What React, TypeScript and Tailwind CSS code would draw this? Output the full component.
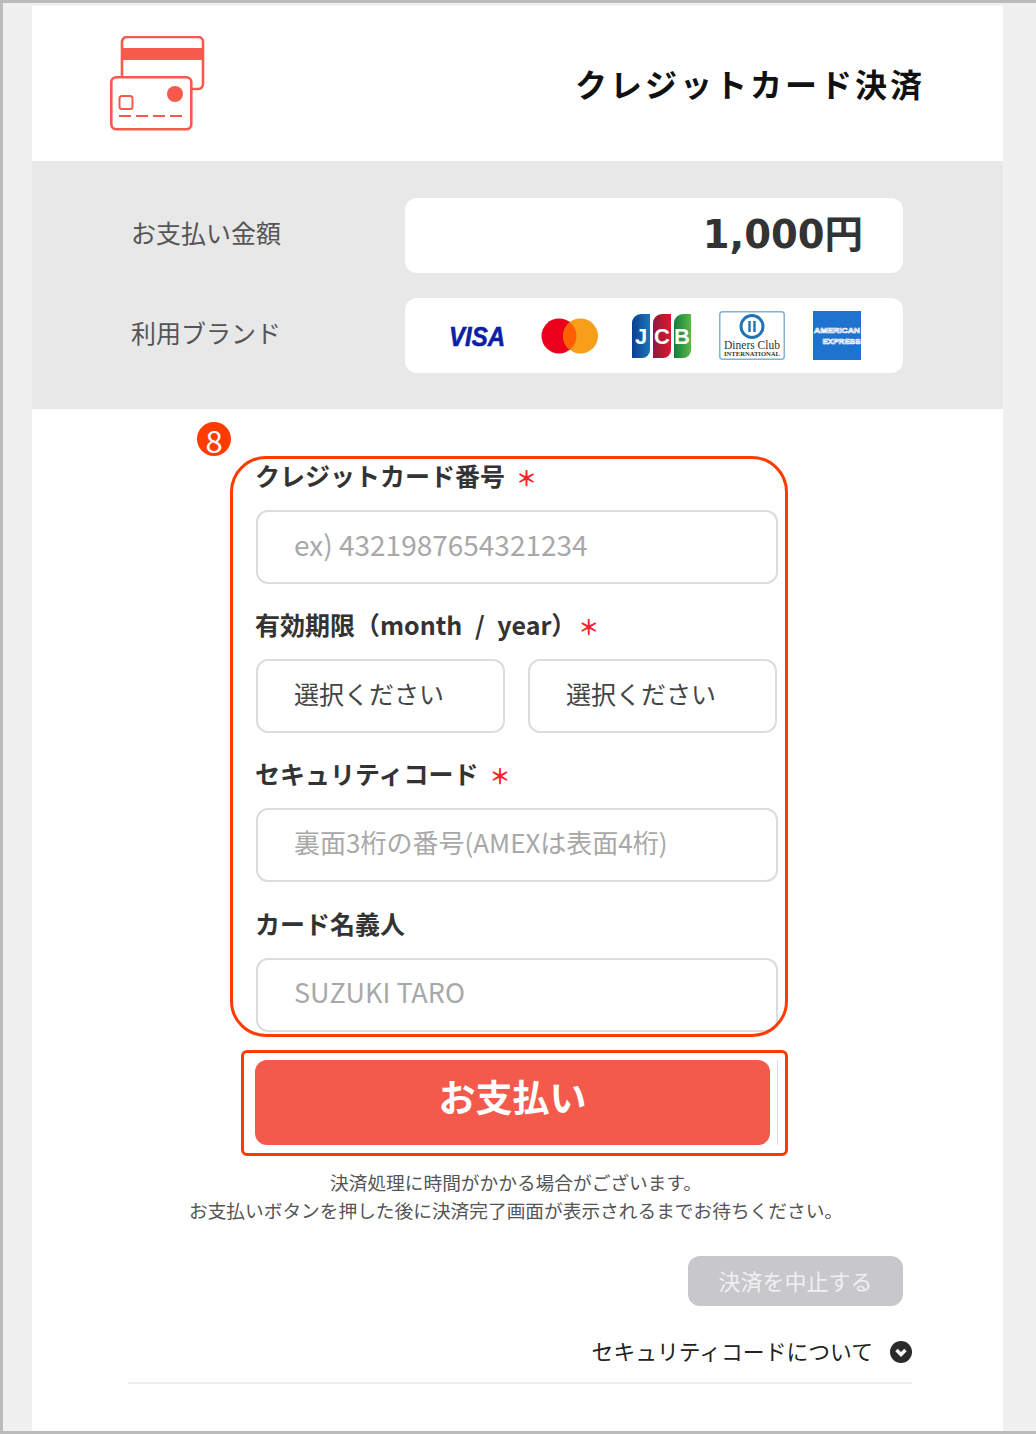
const jp = "font-['Noto_Sans_CJK_JP',sans-serif]";

function CardIcon() {
  return (
    <svg width="96" height="96" viewBox="0 0 96 96" fill="none">
      <path d="M12 42V6a5 5 0 0 1 5-5h71a5 5 0 0 1 5 5v42a5 5 0 0 1-5 5h-6" stroke="#f55a4c" strokeWidth="2.6" />
      <rect x="12" y="12" width="81" height="12" fill="#f55a4c" />
      <rect x="1.3" y="41.3" width="80" height="52" rx="5" fill="#fff" stroke="#f55a4c" strokeWidth="2.6" />
      <circle cx="65" cy="58" r="8" fill="#f55a4c" />
      <rect x="9.5" y="60" width="13" height="13" rx="2.5" stroke="#f55a4c" strokeWidth="2" />
      <path d="M9 80h64" stroke="#f55a4c" strokeWidth="2" strokeDasharray="12 5" />
    </svg>
  );
}

function Visa() {
  return (
    <svg width="66" height="36" viewBox="0 0 66 36">
      <text x="33" y="27.5" textAnchor="middle" fontFamily="'Liberation Sans', sans-serif" fontSize="27" fontWeight="700" fontStyle="italic" fill="#0b1fa5" stroke="#0b1fa5" strokeWidth="0.6" textLength="56" lengthAdjust="spacingAndGlyphs">VISA</text>
    </svg>
  );
}

function Mastercard() {
  return (
    <svg width="57" height="36" viewBox="0 0 57 36">
      <circle cx="18" cy="18" r="17.5" fill="#eb001b" />
      <circle cx="39.5" cy="18" r="17.5" fill="#f79e1b" />
      <path d="M28.75 4.2a17.5 17.5 0 0 1 0 27.6a17.5 17.5 0 0 1 0-27.6z" fill="#ff5f00" />
    </svg>
  );
}

function Jcb() {
  return (
    <svg width="60" height="46" viewBox="0 0 60 46">
      <defs>
        <linearGradient id="jcbBlue" x1="0" x2="1" y1="0" y2="0">
          <stop offset="0" stopColor="#0b3f8f" />
          <stop offset="1" stopColor="#1b75bc" />
        </linearGradient>
        <linearGradient id="jcbRed" x1="0" x2="1" y1="0" y2="0">
          <stop offset="0" stopColor="#8e1a3a" />
          <stop offset="1" stopColor="#e0162f" />
        </linearGradient>
        <linearGradient id="jcbGreen" x1="0" x2="1" y1="0" y2="0">
          <stop offset="0" stopColor="#0f7f3f" />
          <stop offset="1" stopColor="#5ab946" />
        </linearGradient>
      </defs>
      <path d="M1 10a9 9 0 0 1 9-9h9v36a8 8 0 0 1-8 8H1z" fill="url(#jcbBlue)" />
      <path d="M22 10a9 9 0 0 1 9-9h9v36a8 8 0 0 1-8 8h-10z" fill="url(#jcbRed)" />
      <path d="M43 10a9 9 0 0 1 9-9h8v36a8 8 0 0 1-8 8h-9z" fill="url(#jcbGreen)" />
      <text x="10" y="31" textAnchor="middle" fontFamily="'Liberation Sans', sans-serif" fontSize="22" fontWeight="700" fill="#fff">J</text>
      <text x="31" y="31" textAnchor="middle" fontFamily="'Liberation Sans', sans-serif" fontSize="22" fontWeight="700" fill="#fff">C</text>
      <text x="51" y="31" textAnchor="middle" fontFamily="'Liberation Sans', sans-serif" fontSize="22" fontWeight="700" fill="#fff">B</text>
    </svg>
  );
}

function Diners() {
  return (
    <svg width="66" height="49" viewBox="0 0 66 49">
      <rect x="0.75" y="0.75" width="64.5" height="47.5" rx="3" fill="#fff" stroke="#7fb2d9" strokeWidth="1.5" />
      <circle cx="33" cy="15.5" r="11" fill="#fff" stroke="#2173b5" strokeWidth="3" />
      <path d="M30.5 10v11M35.5 10v11" stroke="#2173b5" strokeWidth="2.4" />
      <text x="33" y="38" textAnchor="middle" fontFamily="'Liberation Serif', serif" fontSize="12.5" fill="#333" textLength="56" lengthAdjust="spacingAndGlyphs">Diners Club</text>
      <text x="33" y="45" textAnchor="middle" fontFamily="'Liberation Serif', serif" fontSize="6" fontWeight="700" fill="#333" textLength="56" lengthAdjust="spacingAndGlyphs">INTERNATIONAL</text>
    </svg>
  );
}

function Amex() {
  return (
    <svg width="48" height="49" viewBox="0 0 48 49">
      <rect width="48" height="49" fill="#1f72cd" />
      <text x="24" y="22" textAnchor="middle" fontFamily="'Liberation Sans', sans-serif" fontSize="8" fontWeight="700" fill="#1f72cd" stroke="#fff" strokeWidth="0.7" textLength="46" lengthAdjust="spacingAndGlyphs">AMERICAN</text>
      <text x="28.5" y="33" textAnchor="middle" fontFamily="'Liberation Sans', sans-serif" fontSize="8" fontWeight="700" fill="#1f72cd" stroke="#fff" strokeWidth="0.7" textLength="38" lengthAdjust="spacingAndGlyphs">EXPRESS</text>
    </svg>
  );
}

function FieldLabel({ text, required, star = "ml-[11px]" }: { text: string; required?: boolean; star?: string }) {
  return (
    <div className="-ml-[1px] flex h-[30px] items-center pb-[4px] text-[25px] leading-[30px] font-bold text-[#333] [word-spacing:7px]">
      <span>{text}</span>
      {required && <span className={`${star} mt-[4px] text-[21px] font-bold text-[#f5222d]`}>＊</span>}
    </div>
  );
}

function TextInput({ placeholder, size }: { placeholder: string; size: string }) {
  return (
    <input
      readOnly
      placeholder={placeholder}
      className={`${size} mt-[18px] block h-[74px] w-[522px] rounded-[12px] border-2 border-[#dcdce0] bg-white pb-[7px] pl-[36px] outline-none placeholder:text-[#a8a8a8]`}
    />
  );
}

function SelectBox() {
  return (
    <div className="flex h-[74px] w-[249px] items-center rounded-[12px] border-2 border-[#dcdce0] bg-white pb-[4px] pl-[36px] text-[25px] text-[#444]">
      選択ください
    </div>
  );
}

export default function App() {
  return (
    <div className={`relative h-[1434px] w-[1036px] border-t-[3px] border-b-[3px] border-l-[3px] border-[#bbbbbb] bg-[#f0f0f0] pt-[3px] pl-[29px] ${jp}`}>
      <div className="h-[1425px] w-[971px] bg-white">
        {/* Header */}
        <div className="flex h-[155px] items-start justify-between pr-[78px] pl-[78px]">
          <div className="mt-[30px]">
            <CardIcon />
          </div>
          <h1 className="mt-[54px] text-[32px] leading-[46px] font-bold tracking-[3px] text-[#111]">クレジットカード決済</h1>
        </div>

        {/* Amount and brands */}
        <div className="flex h-[248px] flex-col gap-[25px] bg-[#e8e8e8] pt-[37px] pl-[99px]">
          <div className="flex items-center">
            <div className="w-[274px] pb-[6px] text-[25px] text-[#555]">お支払い金額</div>
            <div className="flex h-[75px] w-[498px] items-center justify-end rounded-[12px] bg-white pr-[40px] pb-[2px] font-['DejaVu_Sans','Noto_Sans_CJK_JP',sans-serif] text-[38.5px] font-bold text-[#333]">1,000円</div>
          </div>
          <div className="flex items-center">
            <div className="w-[274px] pb-[6px] text-[25px] text-[#555]">利用ブランド</div>
            <div className="flex h-[75px] w-[498px] items-center rounded-[12px] bg-white pl-[39px]">
              <Visa />
              <div className="ml-[31px]"><Mastercard /></div>
              <div className="ml-[33px]"><Jcb /></div>
              <div className="ml-[28px]"><Diners /></div>
              <div className="ml-[28px]"><Amex /></div>
            </div>
          </div>
        </div>

        {/* Card form */}
        <div className="ml-[224px] w-[522px] pt-[53px]">
          <FieldLabel text="クレジットカード番号" required />
          <TextInput placeholder="ex) 4321987654321234" size="text-[28px]" />
          <div className="mt-[27px]">
            <FieldLabel text="有効期限（month / year）" required star="ml-[2px]" />
          </div>
          <div className="mt-[18px] flex gap-[23px]">
            <SelectBox />
            <SelectBox />
          </div>
          <div className="mt-[27px]">
            <FieldLabel text="セキュリティコード" required />
          </div>
          <TextInput placeholder="裏面3桁の番号(AMEXは表面4桁)" size="text-[26px]" />
          <div className="mt-[28px]">
            <FieldLabel text="カード名義人" />
          </div>
          <TextInput placeholder="SUZUKI TARO" size="text-[27px]" />
        </div>

        {/* Pay button */}
        <div className="mt-[28px] ml-[223px] w-[523px] border-r border-[#dddddd]">
          <button className="flex h-[85px] w-[515px] items-center justify-center rounded-[12px] bg-[#f35a4c] pb-[12px] text-[37px] font-bold text-white">お支払い</button>
        </div>

        <p className="mt-[23px] w-[968px] text-center text-[18.7px] leading-[28px] text-[#555]">
          決済処理に時間がかかる場合がございます。
          <br />
          お支払いボタンを押した後に決済完了画面が表示されるまでお待ちください。
        </p>

        <div className="mt-[32px] flex justify-end pr-[100px]">
          <button className="flex h-[50px] w-[215px] items-center justify-center rounded-[12px] bg-[#c8c8cc] pb-[2px] text-[22px] text-[#f0f0f0]">決済を中止する</button>
        </div>

        {/* Security code note */}
        <div className="mt-[30px] mr-[91px] ml-[96px] flex h-[48px] items-start justify-end border-b-2 border-[#eeeeee]">
          <span className="text-[21.8px] leading-[30px] text-[#222]">セキュリティコードについて</span>
          <svg className="mt-[5px] ml-[17px]" width="22" height="22" viewBox="0 0 22 22">
            <circle cx="11" cy="11" r="11" fill="#2b2b2b" />
            <path d="M6.5 9l4.5 4.5L15.5 9" fill="none" stroke="#fff" strokeWidth="3.4" />
          </svg>
        </div>
      </div>

      {/* Annotations */}
      <div className="absolute top-[419px] left-[194px] flex h-[34px] w-[34px] items-center justify-center rounded-full bg-[#ff3b00] text-[31px] leading-none font-normal text-white">8</div>
      <div className="absolute top-[453px] left-[227px] h-[581px] w-[558px] rounded-[36px] border-[3px] border-[#ff3b00]" />
      <div className="absolute top-[1047px] left-[238px] h-[106px] w-[547px] rounded-[6px] border-[3px] border-[#ff3b00]" />
    </div>
  );
}
